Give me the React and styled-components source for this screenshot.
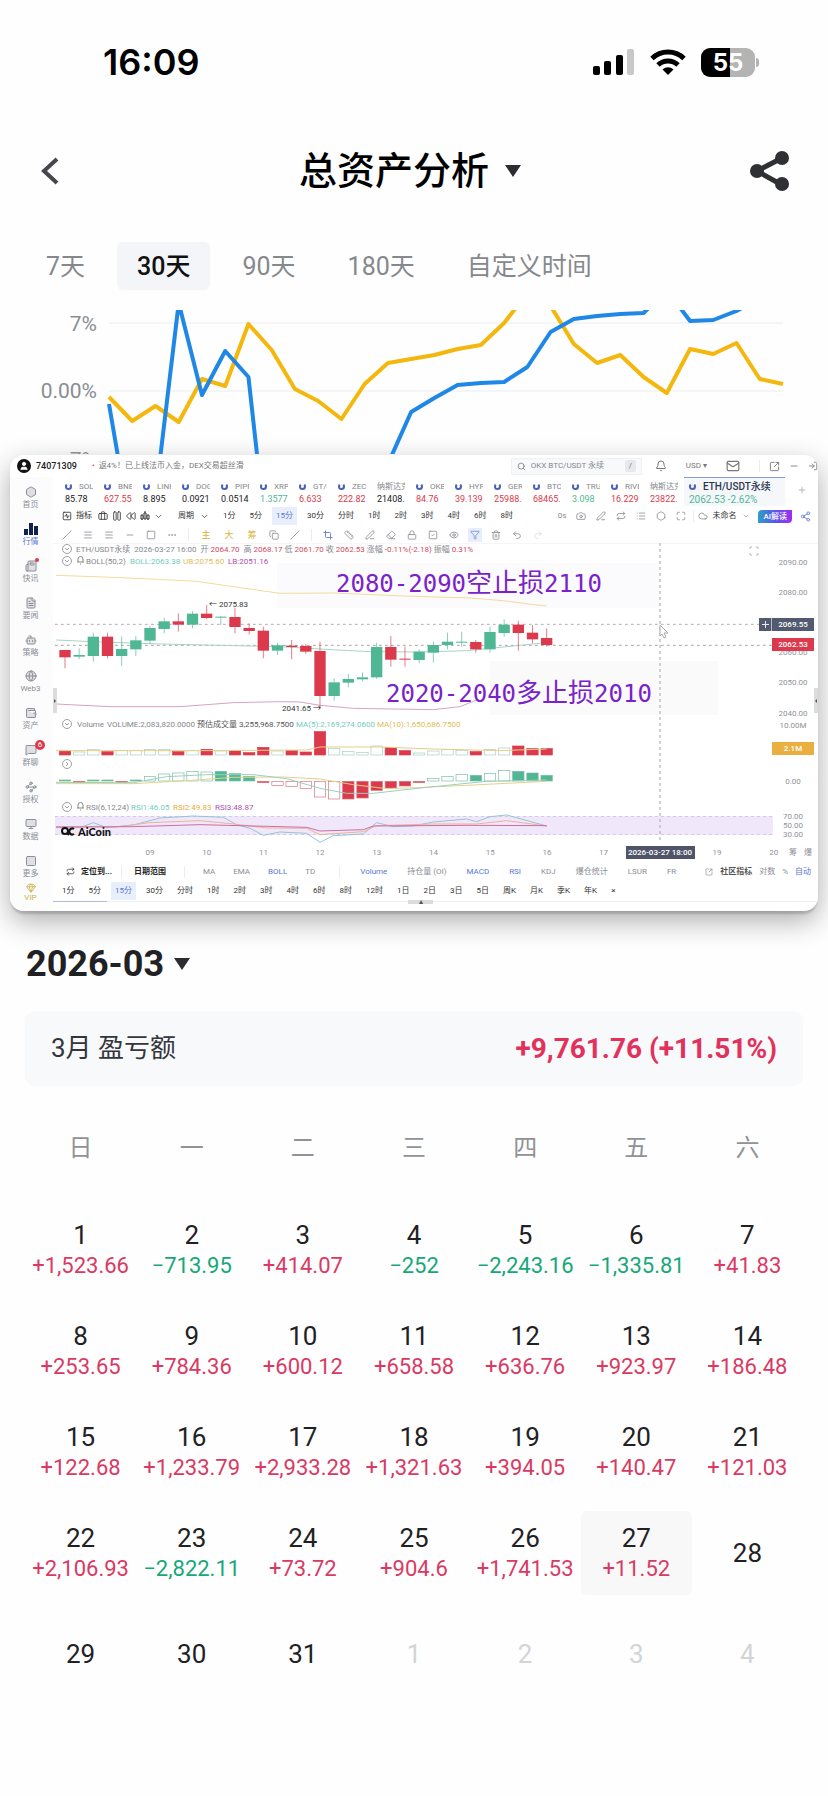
import styled, { createGlobalStyle, css } from "styled-components";
import {
	Bell,
	Bot,
	Briefcase,
	Camera,
	ChevronDown,
	Cloud,
	Copy,
	Crop,
	Ellipsis,
	Eraser,
	Eye,
	FileText,
	Funnel,
	Gem,
	Globe,
	Grid2x2,
	Hexagon,
	List,
	Lock,
	LogIn,
	Mail,
	Maximize,
	Menu,
	MessageSquare,
	Minus,
	Monitor,
	Newspaper,
	PenLine,
	Plus,
	Redo2,
	Repeat,
	Rewind,
	Ruler,
	Search,
	Share2,
	Slash,
	Square,
	SquareActivity,
	SquareArrowOutUpRight,
	SquareCheck,
	StretchVertical,
	Trash2,
	Undo2,
	User,
	Wallet,
	Waypoints,
} from "lucide-react";

const RED = "#dc3a4c";
const GREEN = "#4fb793";
const BLUE = "#5c76d2";

const GlobalStyle = createGlobalStyle`
	* {
		box-sizing: border-box;
	}
	body {
		margin: 0;
		background: #fefefe;
		font-family: Roboto, "Noto Sans CJK SC", sans-serif;
		color: #1f2124;
	}
	button {
		font: inherit;
		color: inherit;
		background: none;
		border: none;
		padding: 0;
		margin: 0;
		white-space: nowrap;
	}
`;

const ranges = ["7天", "30天", "90天", "180天", "自定义时间"];

const assetLine = [
	397, 421, 406, 422, 379, 386, 324, 350, 389, 401, 419, 384, 363, 359, 355,
	349, 345, 323, 293, 306, 344, 363, 355, 377, 393, 349, 354, 343, 379, 384,
];
const btcLine = [
	404, 540, 497, 303, 395, 351, 377, 587, 600, 600, 580, 520, 464, 412, 398,
	385, 383, 382, 367, 332, 319, 316, 314, 313, 290, 321, 320, 311, 298, 290,
];

const toPoints = (list) =>
	list.map((y, i) => `${109 + (i * 674) / 29},${y - 310}`).join(" ");

const tickers = [
	["SOL", "85.78", ""],
	["BNB", "627.55", RED],
	["LINK", "8.895", ""],
	["DOGE", "0.0921", ""],
	["PIPPIN", "0.0514", ""],
	["XRP", "1.3577", GREEN],
	["GT/U", "6.633", RED],
	["ZEC", "222.82", RED],
	["纳斯达克", "21408.", ""],
	["OKB", "84.76", RED],
	["HYPE", "39.139", RED],
	["GER", "25988.", RED],
	["BTC", "68465.", RED],
	["TRUMP", "3.098", GREEN],
	["RIVER", "16.229", RED],
	["纳斯达克", "23822.", RED],
];

// [up, body top, body bottom, wick top, wick bottom] in thirds of a pixel
const candles = [
	[0, 600, 622, 600, 655],
	[1, 615, 620, 595, 628],
	[1, 560, 618, 548, 635],
	[0, 560, 618, 548, 625],
	[1, 597, 618, 560, 648],
	[1, 571, 598, 558, 618],
	[1, 534, 572, 528, 582],
	[1, 514, 537, 503, 550],
	[0, 514, 524, 490, 545],
	[1, 491, 524, 484, 535],
	[0, 491, 504, 465, 508],
	[1, 500, 503, 498, 525],
	[0, 501, 531, 473, 550],
	[0, 534, 543, 520, 553],
	[0, 542, 602, 530, 625],
	[1, 586, 602, 578, 615],
	[0, 587, 591, 570, 628],
	[0, 588, 605, 582, 612],
	[0, 603, 738, 575, 775],
	[1, 697, 738, 685, 752],
	[1, 687, 698, 672, 712],
	[1, 682, 688, 667, 694],
	[1, 591, 682, 578, 687],
	[0, 591, 629, 558, 650],
	[0, 626, 629, 590, 650],
	[1, 605, 630, 598, 640],
	[1, 585, 608, 575, 638],
	[1, 575, 585, 548, 598],
	[1, 575, 578, 545, 590],
	[0, 576, 598, 570, 608],
	[1, 546, 598, 530, 608],
	[1, 524, 549, 508, 560],
	[0, 524, 549, 512, 602],
	[0, 548, 568, 525, 580],
	[0, 564, 585, 535, 590],
];

const volumes = [
	12, 9, 17, 10, 13, 13, 16, 17, 10, 13, 17, 12, 13, 7, 23, 12, 13, 9, 70, 20,
	11, 8, 27, 23, 13, 6, 12, 16, 13, 10, 16, 21, 27, 19, 19,
];

// [value, filled]
const macd = [
	[3, 1], [-3, 1], [3, 1], [3, 1], [-3, 1], [3, 1], [13, 0], [21, 0], [24, 0],
	[29, 0], [27, 0], [29, 1], [22, 1], [14, 1], [-4, 1], [-13, 0], [-16, 0],
	[-22, 0], [-47, 0], [-53, 0], [-53, 1], [-50, 1], [-27, 1], [-20, 1],
	[-14, 1], [-4, 1], [7, 0], [13, 0], [19, 0], [17, 1], [23, 0], [31, 0],
	[29, 1], [24, 1], [17, 1],
];

const periods = ["1分", "5分", "15分", "30分", "分时", "1时", "2时", "3时", "4时", "6时", "8时"];
const morePeriods = ["12时", "1日", "2日", "3日", "5日", "周K", "月K", "季K", "年K", "×"];

const menu = [
	["首页", Hexagon],
	["行情", null],
	["快讯", Newspaper],
	["要闻", FileText],
	["策略", Bot],
	["Web3", Globe],
	["资产", Wallet],
	["群聊", MessageSquare],
	["授权", Waypoints],
	["数据", Monitor],
	["更多", Grid2x2],
];

const days = [
	[1, "+1,523.66"], [2, "-713.95"], [3, "+414.07"], [4, "-252"],
	[5, "-2,243.16"], [6, "-1,335.81"], [7, "+41.83"], [8, "+253.65"],
	[9, "+784.36"], [10, "+600.12"], [11, "+658.58"], [12, "+636.76"],
	[13, "+923.97"], [14, "+186.48"], [15, "+122.68"], [16, "+1,233.79"],
	[17, "+2,933.28"], [18, "+1,321.63"], [19, "+394.05"], [20, "+140.47"],
	[21, "+121.03"], [22, "+2,106.93"], [23, "-2,822.11"], [24, "+73.72"],
	[25, "+904.6"], [26, "+1,741.53"], [27, "+11.52"], [28], [29], [30], [31],
];

const StatusIcons = () => (
	<StatusGroup>
		<svg width="42" height="26" viewBox="0 0 42 26">
			<rect x="0" y="17" width="7" height="9" rx="2" />
			<rect x="11" y="12" width="7" height="14" rx="2" />
			<rect x="23" y="6" width="7" height="20" rx="2" />
			<rect x="34" y="0" width="7" height="26" rx="2" fill="#c8c8c8" />
		</svg>
		<svg width="36" height="26" viewBox="0 0 36 26" fill="none" stroke="#000" strokeWidth="5">
			<path d="M2 9.500 A23 23 0 0 1 34 9.500" />
			<path d="M8 16 A14.500 14.500 0 0 1 28 16" />
			<path d="M18 26 L12.500 20.500 A8 8 0 0 1 23.500 20.500 Z" fill="#000" stroke="none" />
		</svg>
		<Battery>55</Battery>
	</StatusGroup>
);

const PnlChart = () => (
	<PnlSvg viewBox="0 0 828 144">
		<path d="M109 13H783M109 81H783" stroke="#f5f5f5" strokeWidth="2" />
		<g fontSize="21" fill="#8a8d92" textAnchor="end">
			<text x="97" y="21">7%</text>
			<text x="97" y="88">0.00%</text>
			<text x="97" y="157">-7%</text>
		</g>
		<g fill="none" strokeWidth="4" strokeLinejoin="round">
			<polyline points={toPoints(assetLine)} stroke="#f3b70e" />
			<polyline points={toPoints(btcLine)} stroke="#1f87e5" />
		</g>
	</PnlSvg>
);

const Fold = ({ y, right }) => (
	<g fill="none" stroke="#a0a0a0">
		<circle cx="67" cy={y} r="4.500" />
		<path d={right ? `M66 ${y - 2}l2 2l-2 2` : `M65 ${y - 1}l2 2l2 -2`} />
	</g>
);

const MiniBell = ({ y }) => (
	<path
		d={`M77 ${y + 2}h7M78 ${y + 2}v-3a2.500 2.500 0 0 1 5 0v3M80 ${y + 4}h1`}
		fill="none"
		stroke="#888"
	/>
);

const MarketChart = () => (
	<svg viewBox="53 543 765 319" width="100%" display="block">
		<rect x="277" y="563" width="383" height="45" fill="#fbfafc" />
		<rect x="490" y="661" width="228" height="54" fill="#fbfafb" />
		<path d="M53 543.500H818" stroke="#f6f6f8" />
		<rect x="55" y="816" width="718" height="19" fill="#f1e7fb" />
		<path d="M55 816.500H773M55 834.500H773" stroke="#d6cade" strokeDasharray="3 3" />

		{/* bands and candles share a 1/3 px grid that starts at y 450 */}
		<g transform="translate(0 450) scale(.33333)" fill="none" strokeWidth="3">
			<path d="M165 523H2280" stroke="#b9a9ad" strokeDasharray="8 10" />
			<path d="M165 586H2320" stroke="#a9a09f" strokeDasharray="8 10" />
			<path
				d="M168 376L340 382L470 388L590 394L700 410L840 430L1000 429L1210 438L1410 444L1510 452L1600 464L1640 468"
				stroke="#f0dc9d"
			/>
			<path
				d="M168 570L300 576L480 582L840 590L960 597L1110 605L1260 606L1400 602L1500 592L1640 578"
				stroke="#a5d6c4"
			/>
			<path
				d="M168 762L330 770L540 770L700 758L840 755L900 756L960 766L1060 775L1300 779L1380 770L1430 750"
				stroke="#d6a3c3"
			/>
			{candles.map(([up, top, bottom, high, low], i) => {
				const x = 195 + i * 42.5;
				const color = up ? GREEN : RED;
				return (
					<g key={i}>
						<path d={`M${x} ${high}V${low}`} stroke={color} strokeWidth="2" />
						<rect x={x - 17} y={top} width="34" height={bottom - top} fill={color} />
					</g>
				);
			})}
			{volumes.map((v, i) => (
				<rect
					key={i}
					x={178 + i * 42.5}
					y={915 - v}
					width="34"
					height={v}
					fill={candles[i][0] ? "#fff" : RED}
					stroke={candles[i][0] ? "#a5cdbd" : RED}
					strokeWidth="2"
				/>
			))}
			<path
				d="M168 902L600 902L920 900L960 891L1140 891L1300 897L1500 902L1640 897"
				stroke="#e6cf88"
			/>
			{macd.map(([v, filled], i) => (
				<rect
					key={i}
					x={178 + i * 42.5}
					y={v > 0 ? 993 - v : 994}
					width="34"
					height={Math.abs(v)}
					fill={filled ? (v > 0 ? GREEN : RED) : "#fff"}
					stroke={v > 0 ? "#79bda3" : "#d4707c"}
					strokeWidth="2"
				/>
			))}
			<path
				d="M168 1001L400 1001L560 992L700 982L850 981L960 987L1060 1004L1160 1016L1250 1013L1400 1006L1640 994"
				stroke="#e3d18c"
			/>
			<path
				d="M168 997L400 998L500 980L620 974L760 974L860 986L960 1015L1040 1030L1120 1030L1280 1012L1460 994L1640 990"
				stroke="#9ccfbd"
			/>
			<path
				d="M168 1133L240 1133L280 1118L320 1133L400 1125L480 1104L580 1098L670 1102L710 1124L750 1135L790 1156L840 1146L920 1150L960 1177L1000 1157L1090 1152L1130 1118L1180 1130L1240 1128L1300 1116L1400 1107L1430 1115L1470 1100L1520 1095L1640 1128"
				stroke="#94c4d6"
			/>
			<path
				d="M168 1130L350 1131L450 1118L600 1112L700 1122L800 1134L920 1135L960 1154L1090 1145L1130 1127L1300 1122L1430 1122L1520 1112L1640 1128"
				stroke="#e7b49a"
			/>
			<path
				d="M168 1131L400 1130L600 1124L920 1132L960 1143L1090 1139L1120 1128L1400 1126L1640 1127"
				stroke="#cf6c9f"
			/>
		</g>

		<Fold y={549} />
		<Fold y={561} />
		<Fold y={724} />
		<Fold y={764} right />
		<Fold y={807} />
		<MiniBell y={560} />
		<MiniBell y={806} />

		<g fontSize="8" fill="#85878c">
			<text x="76" y="552">
				ETH/USDT永续{"\u00a0 "}2026-03-27 16:00{"\u00a0 "}开 <Red>2064.70</Red>{"\u00a0 "}高{" "}
				<Red>2068.17</Red> 低 <Red>2061.70</Red> 收 <Red>2062.53</Red> 涨幅{" "}
				<Red>-0.11%(-2.18)</Red> 振幅 <Red>0.31%</Red>
			</text>
			<text x="86" y="564">BOLL(50,2)</text>
			<text x="130" y="564" fill="#72cdb9">BOLL:2063.38</text>
			<text x="183" y="564" fill="#dfbd55">UB:2075.60</text>
			<text x="228" y="564" fill="#ae4fb0">LB:2051.16</text>
			<text x="77" y="727">Volume</text>
			<text x="107" y="727">VOLUME:2,083,820.0000</text>
			<text x="197" y="727" fill="#555">预估成交量 3,255,968.7500</text>
			<text x="296" y="727" fill="#72cdb9">MA(5):2,169,274.0600</text>
			<text x="377" y="727" fill="#dfbd55">MA(10):1,650,686.7500</text>
			<text x="86" y="810">RSI(6,12,24)</text>
			<text x="131" y="810" fill="#72cdb9">RSI1:46.05</text>
			<text x="173" y="810" fill="#e8ae3c">RSI2:49.83</text>
			<text x="215" y="810" fill="#ae4fb0">RSI3:48.87</text>
			<text x="209" y="607" fill="#333">← 2075.83</text>
			<text x="282" y="711" fill="#333">2041.65 →</text>
		</g>

		<g fontSize="24" fill="#7a22c9" fontFamily='"DejaVu Sans Mono", "Noto Sans CJK SC", monospace'>
			<text x="336" y="592">
				2080-2090<tspan fontSize="26">空止损</tspan>2110
			</text>
			<text x="386" y="702">
				2020-2040<tspan fontSize="26">多止损</tspan>2010
			</text>
		</g>

		<path d="M660 543V843" stroke="#a5a5a5" strokeDasharray="3 3" />
		<path d="M660 625l8 8h-4l2 4l-2 1l-2 -4l-2 2z" fill="#fff" stroke="#aaa" />
		<g fill="none" stroke="#bbb">
			<path d="M750 549v-2h2M756 547h2v2M758 553v2h-2M752 555h-2v-2" />
		</g>

		<g fontSize="8" fill="#909399" textAnchor="middle">
			<text x="793" y="565">2090.00</text>
			<text x="793" y="595">2080.00</text>
			<text x="793" y="655">2060.00</text>
			<text x="793" y="685">2050.00</text>
			<text x="793" y="716">2040.00</text>
			<text x="793" y="728">10.00M</text>
			<text x="793" y="784">0.00</text>
			<text x="793" y="819">70.00</text>
			<text x="793" y="828">50.00</text>
			<text x="793" y="837">30.00</text>
			{["09", "10", "11", "12", "13", "14", "15", "16", "17", "", "19", "20"].map((t, i) => (
				<text key={i} x={150 + i * 56.7} y="855">
					{t}
				</text>
			))}
			<text x="793" y="855">筹</text>
			<text x="808" y="855">爆</text>
		</g>

		<rect x="759" y="618" width="55" height="13" fill="#515a6e" />
		<path d="M771.500 618v13" stroke="#b5bac4" />
		<path d="M762 624.500h7M765.500 621v7" stroke="#e6e8ec" />
		<rect x="772" y="638" width="42" height="13" fill={RED} />
		<rect x="772" y="742" width="42" height="13" fill="#e9b03f" />
		<rect x="626" y="846" width="69" height="13" fill="#4f5468" />
		<g fontSize="8" fontWeight="500" fill="#fff" textAnchor="middle">
			<text x="793" y="627">2069.55</text>
			<text x="793" y="647">2062.53</text>
			<text x="793" y="751">2.1M</text>
			<text x="660" y="855">2026-03-27 18:00</text>
		</g>

		<g fill="none" stroke="#111" strokeWidth="2">
			<circle cx="65" cy="831" r="3" />
			<path d="M67 833l2 2M74 829a3 3 0 1 0 0 5" />
		</g>
		<text x="78" y="836" fontSize="11" fontWeight="900" fill="#111" fontFamily="Lato, sans-serif">
			AiCoin
		</text>
		<rect x="53" y="688" width="4" height="25" fill="#dcdcdc" />
		<rect x="814" y="688" width="4" height="25" fill="#dcdcdc" />
		<path d="M54 699l2 2l-2 2zM817 699l-2 2l2 2z" fill="#555" />
	</svg>
);

const Terminal = () => (
	<TerminalCard>
		<TopBar>
			<Avatar>
				<User size={10} fill="#fff" />
			</Avatar>
			<Account>74071309</Account>
			<Notice>返4%！已上线法币入金，DEX交易超丝滑</Notice>
			<SearchBox>
				<Search size={9} />
				<input type="text" aria-label="搜索" placeholder="OKX BTC/USDT 永续" />
				<kbd>/</kbd>
			</SearchBox>
			<Bell size={12} />
			<Currency>USD ▾</Currency>
			<Mail size={14} />
			<WindowTools>
				<Divider />
				<SquareArrowOutUpRight size={11} />
				<Minus size={10} />
				<LogIn size={10} />
			</WindowTools>
		</TopBar>
		<TerminalBody>
			<Sidebar>
				<MenuList>
					{menu.map(([label, Icon]) => (
						<MenuItem key={label} $active={!Icon}>
							{Icon ? (
								<Icon size={12} fill="#dfe0e4" />
							) : (
								<svg width="14" height="12" viewBox="0 0 14 12" fill="#10204f">
									<path d="M0 6h4v6H0zM5 0h4v12H5zM10 3h4v9h-4z" />
								</svg>
							)}
							{label}
							{label === "快讯" && <Dot />}
							{label === "群聊" && <Badge>6</Badge>}
						</MenuItem>
					))}
				</MenuList>
				<Vip>
					<Gem size={10} />
					VIP
				</Vip>
			</Sidebar>
			<Main>
				<TickerRow>
					{tickers.map(([name, price, color], i) => (
						<Ticker key={i}>
							<TickerName>
								{name !== "纳斯达克" && <Swirl />}
								{name}
							</TickerName>
							<TickerPrice $color={color}>{price}</TickerPrice>
						</Ticker>
					))}
					<ActiveTicker>
						<strong>
							<Swirl />
							ETH/USDT永续
						</strong>
						<span>2062.53 -2.62%</span>
					</ActiveTicker>
					<AddTicker aria-label="添加">
						<Plus size={10} />
					</AddTicker>
				</TickerRow>

				<ToolRow $height={20}>
					<Tools $gap={4}>
						<SquareActivity size={10} />
						<ToolText>指标</ToolText>
						<Briefcase size={10} />
						<StretchVertical size={10} />
						<Rewind size={10} />
						<svg width="10" height="10" viewBox="0 0 10 10" fill="none" stroke="#333">
							<path d="M1 4h2v4H1zM4 2h2v6H4zM7 4h2v4H7zM5 0v2M2 8v1M8 8v1" />
						</svg>
						<ChevronDown size={9} />
					</Tools>
					<Tools $gap={4} $left={15}>
						<ToolText>周期</ToolText>
						<ChevronDown size={9} />
					</Tools>
					<Tools $gap={14} $left={14}>
						{periods.map((p) => (
							<Period key={p} $active={p === "15分"}>
								{p}
							</Period>
						))}
					</Tools>
					<Tools $gap={10} $muted $left="auto">
						<span>0s</span>
						<Camera size={10} />
						<PenLine size={10} />
						<Repeat size={10} />
						<List size={10} />
						<Hexagon size={10} />
						<Maximize size={10} />
					</Tools>
					<Tools $gap={4} $muted $left={7}>
						<Divider />
						<Cloud size={10} />
						<ToolText>未命名</ToolText>
						<ChevronDown size={8} />
					</Tools>
					<AiButton>AI解读</AiButton>
					<Share2 size={11} color="#6b80cf" />
				</ToolRow>

				<ToolRow $height={17}>
					<Tools $gap={11} $muted>
						<Slash size={10} />
						<Menu size={10} />
						<Menu size={10} />
						<Minus size={10} />
						<Square size={10} />
						<Ellipsis size={10} />
						<Divider />
						<Gold>主</Gold>
						<Gold>大</Gold>
						<Gold>筹</Gold>
						<Copy size={10} />
						<Slash size={10} />
						<Divider />
						<Crop size={10} color={BLUE} />
						<Ruler size={10} />
						<PenLine size={10} />
						<Eraser size={10} />
						<Lock size={10} />
						<SquareCheck size={10} />
						<Eye size={10} />
						<FilterOn>
							<Funnel size={10} />
						</FilterOn>
						<Trash2 size={10} />
						<Undo2 size={10} />
						<Redo2 size={10} color="#ddd" />
					</Tools>
				</ToolRow>

				<MarketChart />

				<ToolRow $height={19}>
					<Tools $gap={6} $left={4}>
						<Repeat size={9} />
						<Heavy>定位到...</Heavy>
					</Tools>
					<Tools $gap={12} $left={9}>
						<Divider />
						<Heavy>日期范围</Heavy>
					</Tools>
					<Tools $gap={18} $muted $left={18}>
						<Divider />
						<span>MA</span>
						<span>EMA</span>
						<Link href="#boll">BOLL</Link>
						<span>TD</span>
					</Tools>
					<Tools $gap={20} $muted $left={24}>
						<Divider />
						<Link href="#volume">Volume</Link>
						<span>持仓量 (OI)</span>
						<Link href="#macd">MACD</Link>
						<Link href="#rsi">RSI</Link>
						<span>KDJ</span>
						<span>爆仓统计</span>
						<span>LSUR</span>
						<span>FR</span>
					</Tools>
					<Tools $gap={7} $muted $left="auto">
						<SquareArrowOutUpRight size={8} />
						<Heavy $soft>社区指标</Heavy>
						<span>对数</span>
						<span>%</span>
						<Link href="#auto">自动</Link>
					</Tools>
				</ToolRow>
				<ToolRow $height={19}>
					<Tools $gap={14}>
						{[...periods, ...morePeriods].map((p) => (
							<Period key={p} $active={p === "15分"}>
								{p}
							</Period>
						))}
					</Tools>
				</ToolRow>
				<Footer>
					<Handle aria-label="展开">▴</Handle>
				</Footer>
			</Main>
		</TerminalBody>
	</TerminalCard>
);

const App = () => (
	<>
		<GlobalStyle />
		<StatusBar>
			<Clock>16:09</Clock>
			<StatusIcons />
		</StatusBar>
		<Header>
			<button aria-label="返回">
				<svg width="24" height="32" viewBox="0 0 24 32" fill="none" stroke="#45474b" strokeWidth="4">
					<path d="M18 4L5 16L18 28" />
				</svg>
			</button>
			<Title>
				总资产分析
				<Triangle />
			</Title>
			<button aria-label="分享">
				<svg width="40" height="40" viewBox="0 0 40 40" fill="#2e3034">
					<path d="M33 7L8 20L33 34" fill="none" stroke="#2e3034" strokeWidth="5" />
					<circle cx="33" cy="7" r="7" />
					<circle cx="8" cy="20" r="7" />
					<circle cx="33" cy="33" r="7" />
				</svg>
			</button>
		</Header>
		<Tabs>
			{ranges.map((r) => (
				<Tab key={r} $active={r === "30天"}>
					{r}
				</Tab>
			))}
		</Tabs>
		<PnlChart />
		<Terminal />
		<MonthButton>
			2026-03
			<Triangle />
		</MonthButton>
		<Summary>
			<span>3月 盈亏额</span>
			<strong>+9,761.76 (+11.51%)</strong>
		</Summary>
		<WeekRow>
			{["日", "一", "二", "三", "四", "五", "六"].map((d) => (
				<span key={d}>{d}</span>
			))}
		</WeekRow>
		<DayGrid>
			{days.map(([day, amount]) => (
				<Day key={day} $today={day === 27}>
					{day}
					{amount && <Amount $down={amount[0] === "-"}>{amount.replace("-", "−")}</Amount>}
				</Day>
			))}
			{[1, 2, 3, 4].map((day) => (
				<Day key={`next${day}`} $outside>
					{day}
				</Day>
			))}
		</DayGrid>
	</>
);

const StatusBar = styled.div`
	display: flex;
	justify-content: space-between;
	align-items: center;
	padding: 44px 73px 0 103px;
	color: #000;
`;

const Clock = styled.div`
	font: 600 36px/36px Inter, sans-serif;
`;

const StatusGroup = styled.div`
	display: flex;
	align-items: center;
	gap: 15px;
`;

const Battery = styled.div`
	position: relative;
	width: 54px;
	border-radius: 9px;
	background: linear-gradient(90deg, #000 54%, #b4b4b4 54%);
	color: #fff;
	text-align: center;
	font: 700 24px/29px Inter, sans-serif;

	&::after {
		content: "";
		position: absolute;
		right: -4px;
		top: 10px;
		width: 3px;
		height: 9px;
		border-radius: 0 3px 3px 0;
		background: #b4b4b4;
	}
`;

const Header = styled.header`
	display: flex;
	align-items: center;
	justify-content: space-between;
	margin-top: 66px;
	padding: 0 39px;

	button {
		display: flex;
	}
`;

const Title = styled.h1`
	display: flex;
	align-items: center;
	gap: 16px;
	margin: 0;
	padding-left: 8px;
	color: #000;
	font-size: 38px;
	font-weight: 500;
	line-height: 50px;
`;

const Triangle = styled.i`
	border: 8px solid transparent;
	border-top: 12px solid #2b2d30;
	border-bottom: none;
`;

const Tabs = styled.nav`
	display: flex;
	gap: 12px;
	margin-top: 46px;
	padding: 0 26px;
`;

const Tab = styled.button`
	height: 48px;
	padding: 0 20px 4px;
	border-radius: 6px;
	font-size: 25px;
	color: #85888c;
	${(props) =>
		props.$active &&
		css`
			background: #f3f5f8;
			color: #111;
			font-weight: 500;
		`}
`;

const PnlSvg = styled.svg`
	display: block;
	width: 100%;
	margin-top: 20px;
	overflow: hidden;
`;

const TerminalCard = styled.section`
	margin: 1px 10px 0;
	border-radius: 14px;
	background: #fff;
	overflow: hidden;
	box-shadow: 0 4px 2px -1px rgba(0, 0, 0, 0.16), 0 10px 28px rgba(0, 0, 0, 0.32);
	font-size: 8px;
	line-height: 12px;
	color: #333;
`;

const TopBar = styled.div`
	display: flex;
	align-items: center;
	height: 22px;
	padding-left: 7px;
	gap: 10px;
	color: #777;
`;

const Avatar = styled.span`
	display: flex;
	justify-content: center;
	width: 14px;
	padding: 2px 0;
	border-radius: 50%;
	background: #111;
	color: #fff;
`;

const Account = styled.span`
	margin-left: -5px;
	font-size: 9px;
	font-weight: 500;
	color: #222;
`;

const Notice = styled.span`
	flex: 1;
	margin-left: 5px;

	&::before {
		content: "•";
		margin-right: 4px;
		color: ${RED};
	}
`;

const SearchBox = styled.label`
	display: flex;
	align-items: center;
	gap: 5px;
	width: 131px;
	height: 17px;
	margin-right: 3px;
	padding: 0 5px;
	border: 1px solid #f0f1f4;
	background: #f8f9fb;

	input {
		flex: 1;
		min-width: 0;
		border: none;
		padding: 0;
		background: none;
		font: inherit;
	}

	input::placeholder {
		color: #85888e;
	}

	kbd {
		width: 11px;
		background: #e6e8ec;
		border-radius: 2px;
		text-align: center;
		font: inherit;
	}
`;

const Currency = styled.button`
	margin: 0 9px;
`;

const WindowTools = styled.div`
	display: flex;
	align-items: center;
	gap: 9px;
	margin-left: 9px;
`;

const Divider = styled.i`
	width: 1px;
	height: 12px;
	background: #ececef;
`;

const TerminalBody = styled.div`
	display: flex;
`;

const Sidebar = styled.aside`
	display: flex;
	flex-direction: column;
	flex: none;
	width: 43px;
	padding: 9px 2px 8px 0;
	background: #fcfcfd;
	color: #8b8e95;
`;

const MenuList = styled.nav`
	display: flex;
	flex: 1;
	flex-direction: column;
	justify-content: space-between;
`;

const MenuItem = styled.button`
	position: relative;
	display: flex;
	flex-direction: column;
	align-items: center;
	line-height: 14px;
	color: ${(props) => (props.$active ? BLUE : "inherit")};
`;

const Dot = styled.i`
	position: absolute;
	top: -2px;
	right: 12px;
	width: 4px;
	height: 4px;
	border-radius: 50%;
	background: ${RED};
`;

const Badge = styled.b`
	position: absolute;
	top: -4px;
	right: 6px;
	width: 10px;
	border-radius: 50%;
	background: ${RED};
	color: #fff;
	font-size: 8px;
	font-weight: 400;
	line-height: 10px;
`;

const Vip = styled.button`
	display: flex;
	flex-direction: column;
	align-items: center;
	margin-top: 2px;
	line-height: 10px;
	color: #cbb24a;
`;

const Main = styled.div`
	flex: 1;
	min-width: 0;
`;

const TickerRow = styled.div`
	display: flex;
	height: 29px;
	padding-left: 7px;
`;

const Ticker = styled.div`
	flex: none;
	width: 39px;
	padding: 3px 4px 0 5px;
	line-height: 13px;
`;

const TickerName = styled.div`
	display: flex;
	align-items: center;
	gap: 7px;
	overflow: hidden;
	width: 28px;
	color: #85878c;
	white-space: nowrap;
`;

const TickerPrice = styled.div`
	font-size: 9px;
	color: ${(props) => props.$color || "#222"};
`;

const Swirl = styled.i`
	flex: none;
	width: 7px;
	height: 7px;
	border: 2px solid #4a60b8;
	border-top-color: transparent;
	border-radius: 50%;
`;

const ActiveTicker = styled.div`
	display: flex;
	flex-direction: column;
	width: 101px;
	padding: 2px 0 0 5px;
	border-top: 1px solid #7d9fd6;
	background: #f5f7fb;
	font-size: 10px;
	line-height: 13px;
	color: ${GREEN};

	strong {
		display: flex;
		align-items: center;
		gap: 7px;
		font-weight: 500;
		color: #2c3550;
	}
`;

const AddTicker = styled.button`
	flex: 1;
	color: #aaa;
`;

const ToolRow = styled.div`
	display: flex;
	align-items: center;
	height: ${(props) => props.$height}px;
	padding: 0 7px 0 9px;
`;

const Tools = styled.div`
	display: flex;
	align-items: center;
	flex: none;
	gap: ${(props) => props.$gap}px;
	margin-left: ${(props) => (props.$left === "auto" ? "auto" : `${props.$left || 0}px`)};
	color: ${(props) => (props.$muted ? "#8b8e94" : "#333")};
`;

const ToolText = styled.button`
	padding-right: 2px;
	color: #333;
`;

const Period = styled.button`
	${(props) =>
		props.$active &&
		css`
			margin: 0 -4px;
			padding: 3px 4px;
			background: #e8eefc;
			color: ${BLUE};
		`}
`;

const AiButton = styled.button`
	margin: 0 8px;
	padding: 0 5px;
	border-radius: 4px 0 4px 0;
	background: linear-gradient(90deg, #2ea0c4, #5a55ee, #a02fee);
	color: #fff;
	font-weight: 500;
	line-height: 13px;
`;

const Gold = styled.button`
	width: 12px;
	font-size: 9px;
	color: #d6b53c;
`;

const FilterOn = styled.button`
	display: flex;
	margin: 0 -2px;
	padding: 2px;
	background: #e8eefc;
	color: #6f8fd8;
`;

const Heavy = styled.button`
	font-weight: 700;
	color: ${(props) => (props.$soft ? "#555" : "#222")};
`;

const Link = styled.a`
	color: ${BLUE};
	text-decoration: none;
`;

const Footer = styled.div`
	display: flex;
	justify-content: center;
	height: 11px;
	padding-right: 30px;
	background: linear-gradient(90deg, #aebbe0 54px, #f0f0f2 54px) 0 1px / 100% 1px no-repeat;
`;

const Handle = styled.button`
	width: 25px;
	height: 4px;
	background: #dcdcdc;
	color: #555;
	line-height: 4px;
`;

const Red = styled.tspan`
	fill: #cf4b62;
`;

const MonthButton = styled.button`
	display: flex;
	align-items: center;
	gap: 10px;
	margin: 33px 0 0 26px;
	font-size: 36px;
	font-weight: 700;
	line-height: 40px;
`;

const Summary = styled.div`
	display: flex;
	justify-content: space-between;
	margin: 27px 25px 0;
	padding: 22px 26px;
	border-radius: 10px;
	background: #f8f9fb;
	font-size: 26px;
	line-height: 31px;

	span {
		color: #33363b;
	}

	strong {
		color: #e2315c;
		font-size: 28px;
	}
`;

const WeekRow = styled.div`
	display: grid;
	grid-template-columns: repeat(7, 1fr);
	margin: 46px 25px 0;
	text-align: center;
	font-size: 24px;
	line-height: 32px;
	color: #909296;
`;

const DayGrid = styled.div`
	display: grid;
	grid-template-columns: repeat(7, 1fr);
	grid-auto-rows: 84px;
	row-gap: 17px;
	margin: 44px 25px 0;
	padding-bottom: 100px;
`;

const Day = styled.button`
	min-width: 0;
	border-radius: 6px;
	font-size: 26px;
	line-height: 32px;
	color: ${(props) => (props.$outside ? "#d3d4d6" : "#1f2124")};
	background: ${(props) => (props.$today ? "#f8f8f9" : "none")};
`;

const Amount = styled.span`
	display: block;
	font-size: 22px;
	line-height: 30px;
	color: ${(props) => (props.$down ? "#16a877" : "#d93a63")};
`;

export default App;
